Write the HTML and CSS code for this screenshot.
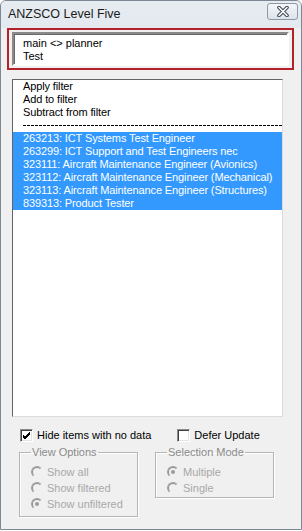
FILE: index.html
```
<!DOCTYPE html>
<html>

<head>
  <meta charset="UTF-8">
  <title>ANZSCO Level Five</title>
  <link rel="stylesheet" href="styles.css">
</head>

<body>
  <div class="window">
    <div class="titlebar">
      <span class="title">ANZSCO Level Five</span>
      <div class="close-btn">
        <svg width="14" height="11" viewBox="0 0 14 11">
          <path d="M3 1.5 L11 9.5 M11 1.5 L3 9.5" stroke="#3c4654" stroke-width="3.6" stroke-linecap="round" />
          <path d="M3 1.5 L11 9.5 M11 1.5 L3 9.5" stroke="#ffffff" stroke-width="1.6" stroke-linecap="round" />
        </svg>
      </div>
    </div>

    <div class="note">
      <div class="textbox">
        <div>main &lt;&gt; planner</div>
        <div>Test</div>
      </div>
    </div>

    <div class="listbox">
      <div class="item">Apply filter</div>
      <div class="item">Add to filter</div>
      <div class="item">Subtract from filter</div>
      <div class="item separator"><span class="dash"></span></div>
      <div class="item selected">263213: ICT Systems Test Engineer</div>
      <div class="item selected">263299: ICT Support and Test Engineers nec</div>
      <div class="item selected">323111: Aircraft Maintenance Engineer (Avionics)</div>
      <div class="item selected">323112: Aircraft Maintenance Engineer (Mechanical)</div>
      <div class="item selected">323113: Aircraft Maintenance Engineer (Structures)</div>
      <div class="item selected">839313: Product Tester</div>
    </div>

    <div class="checks">
      <label class="check hide-items">
        <span class="box">
          <svg width="9" height="9" viewBox="0 0 9 9">
            <path d="M1 4 L3 6 L8 1 M1 5 L3 7 L8 2 M1 6 L3 8 L8 3" stroke="#000" stroke-width="1" fill="none" />
          </svg>
        </span>
        Hide items with no data
      </label>
      <label class="check defer">
        <span class="box"></span>
        Defer Update
      </label>
    </div>

    <div class="groups">
      <fieldset class="group view-options">
        <legend>View Options</legend>
        <div class="radio"><span class="dot"></span>Show all</div>
        <div class="radio"><span class="dot"></span>Show filtered</div>
        <div class="radio on"><span class="dot"></span>Show unfiltered</div>
      </fieldset>
      <fieldset class="group selection-mode">
        <legend>Selection Mode</legend>
        <div class="radio on"><span class="dot"></span>Multiple</div>
        <div class="radio"><span class="dot"></span>Single</div>
      </fieldset>
    </div>
  </div>
</body>

</html>
```

FILE: styles.css
```
* {
  margin: 0;
  padding: 0;
  box-sizing: border-box;
}

body {
  background-color: #fff;
  font-family: "Liberation Sans", Arial, sans-serif;
  font-size: 11px;
  line-height: 13px;
  color: #000;
}

.window {
  width: 302px;
  height: 530px;
  border: 1px solid #7d8896;
  border-radius: 6px 6px 0 0;
  background-color: #f0f0f0;
  overflow: hidden;
}

.titlebar {
  height: 27px;
  display: flex;
  align-items: flex-start;
  justify-content: space-between;
  background: linear-gradient(#e7ecf1, #e3e9ef);
}

.title {
  margin: 6px 0 0 7px;
  font-size: 12.5px;
  line-height: 15px;
  color: #1a1a1a;
}

.close-btn {
  width: 31px;
  height: 17px;
  margin: 2px 3px 0 0;
  border: 1px solid #8e99a6;
  border-radius: 3px;
  background: linear-gradient(#f4f6f9, #dce3eb);
  display: flex;
  align-items: center;
  justify-content: center;
}

/* red highlight round the filter text */
.note {
  width: 287px;
  height: 42px;
  margin-left: 6px;
  border: 2px solid #b3222b;
  padding: 2px 3px;
}

.textbox {
  height: 100%;
  background-color: #fff;
  border-style: solid;
  border-width: 2px;
  border-color: #8a8a8a #fff #fff #8a8a8a;
  box-shadow: inset 1px 1px 0 #6a6a6a;
  padding: 3px 0 0 9px;
}

.listbox {
  width: 271px;
  height: 338px;
  margin: 9px 0 0 11px;
  background-color: #fff;
  border-style: solid;
  border-width: 1px;
  border-color: #646464 #dcdcdc #dcdcdc #646464;
  letter-spacing: -0.12px;
}

.item {
  height: 13px;
  padding-left: 10px;
  white-space: nowrap;
}

.separator {
  padding-top: 6px;
}

.dash {
  display: block;
  height: 1px;
  background: repeating-linear-gradient(to right, #000 0 3px, transparent 3px 4px);
}

.selected {
  background-color: #3399ff;
  color: #fff;
}

.checks {
  display: flex;
  margin: 12px 0 0 19px;
}

.check {
  display: flex;
  align-items: center;
  height: 13px;
}

.defer {
  margin-left: 26px;
}

.box {
  width: 13px;
  height: 13px;
  margin-right: 4px;
  background-color: #fff;
  border-style: solid;
  border-width: 1px;
  border-color: #8a8a8a #fff #fff #8a8a8a;
  box-shadow: inset 1px 1px 0 #404040, inset -1px -1px 0 #e3e3e3;
  display: flex;
  align-items: center;
  justify-content: center;
}

.groups {
  display: flex;
  align-items: flex-start;
  margin: 4px 0 0 18px;
}

.group {
  width: 119px;
  border: 1px solid #b5b5b5;
  box-shadow: 1px 1px 0 #fff, inset 1px 1px 0 #fff;
  padding: 5px 0 4px 11px;
  color: #a8a8a8;
}

.selection-mode {
  margin-left: 17px;
  padding-bottom: 1px;
}

.group legend {
  padding: 0 1px;
  color: #8a8a8a;
}

.radio {
  height: 16px;
  display: flex;
  align-items: center;
}

.dot {
  position: relative;
  width: 12px;
  height: 12px;
  margin-right: 4px;
  border-radius: 50%;
  border: 1px solid transparent;
  border-top-color: #a0a0a0;
  border-left-color: #a0a0a0;
}

.dot::before {
  content: "";
  position: absolute;
  left: 0;
  top: 0;
  right: 0;
  bottom: 0;
  border-radius: 50%;
  border: 1px solid transparent;
  border-top-color: #8c8c8c;
  border-left-color: #8c8c8c;
}

.radio.on .dot::after {
  content: "";
  position: absolute;
  left: 3px;
  top: 3px;
  width: 4px;
  height: 4px;
  border-radius: 50%;
  background-color: #9a9a9a;
}
```
